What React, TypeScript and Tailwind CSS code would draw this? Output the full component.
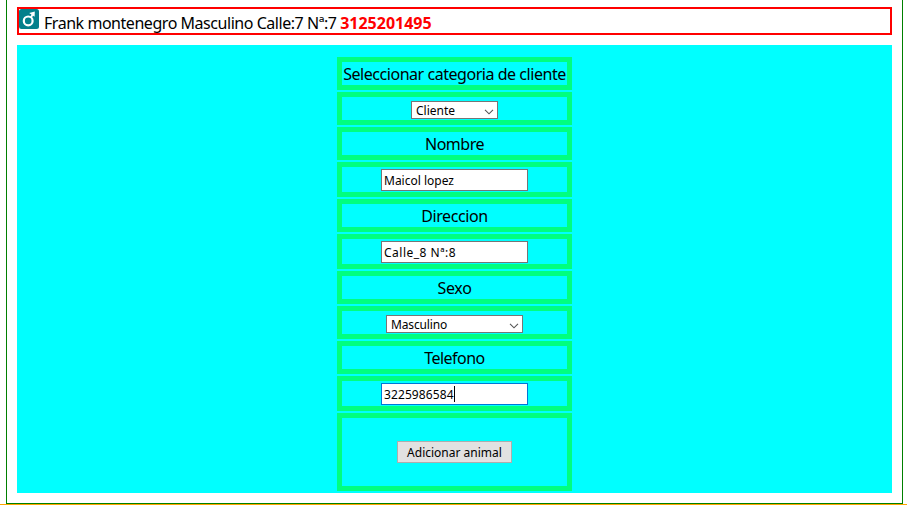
import type { ReactNode } from 'react';

function Cell({ children, className = 'h-[33px]' }: { children: ReactNode; className?: string }) {
  return (
    <div className={`flex w-full justify-center border-[5px] border-[#00ff7f] ${className}`}>
      {children}
    </div>
  );
}

function Label({ text, className }: { text: string; className: string }) {
  return (
    <Cell>
      <span className={`whitespace-nowrap pt-[2px] text-[16px] leading-[21px] ${className}`}>{text}</span>
    </Cell>
  );
}

function Select({ value, className }: { value: string; className: string }) {
  return (
    <Cell>
      <div
        className={`mt-1 flex h-[18px] items-center justify-between border border-[#767676] bg-white pl-1 pr-[3px] font-['Noto_Sans',sans-serif] text-[12px] leading-4 ${className}`}
      >
        <span className="pt-[2px]">{value}</span>
        <svg width="10" height="6" viewBox="0 0 10 6" className="mt-[3px]" fill="none" stroke="#555" strokeWidth="1.1">
          <path d="M1 .8 5 4.8 9 .8" />
        </svg>
      </div>
    </Cell>
  );
}

function Field({ value, focused = false, className }: { value: string; focused?: boolean; className: string }) {
  return (
    <Cell className="h-[35px]">
      <div
        className={`mt-[2px] flex h-[22px] w-[147px] items-center border bg-white pl-[2px] font-['Noto_Sans',sans-serif] text-[12px] leading-4 ${
          focused ? 'border-[#0078d7]' : 'border-[#767676]'
        }`}
      >
        <span className={`whitespace-nowrap pt-[2px] ${className}`}>{value}</span>
        {focused && <span className="h-4 w-px bg-black" />}
      </div>
    </Cell>
  );
}

export default function App() {
  return (
    <div className="h-[505px] overflow-hidden border-b border-[#ffa500] bg-white pl-[6px] pr-1 font-['Noto_Sans',sans-serif] text-black">
      <div className="h-[504px] border border-t-0 border-[#008000] px-[10px] pt-[7px]">
        <div className="flex h-7 border-2 border-[#ff0000]">
          <svg width="20" height="20" viewBox="0 0 20 20" fill="none" stroke="#fff">
            <rect width="20" height="20" rx="2.5" fill="#04808c" stroke="none" />
            <circle cx="9.2" cy="11.9" r="4.4" strokeWidth="2.2" />
            <path d="M11.8 8.4 13.8 5.2" strokeWidth="1.9" />
            <path d="M10.2 4 15.8 2.6 15.6 7.8Z" fill="#fff" stroke="none" />
          </svg>
          <p className="ml-[5px] whitespace-nowrap pt-1 text-[16px] leading-[21px]">
            <span className="tracking-[-0.46px]">Frank montenegro Masculino Calle:7 Nª:7 </span>
            <b className="text-[#ff0000]">3125201495</b>
          </p>
        </div>
        <div className="mt-[10px] flex h-[448px] justify-center bg-[#00ffff] pt-3">
          <div className="flex w-[235px] flex-col gap-[2px]">
            <Label text="Seleccionar categoria de cliente" className="tracking-[-0.46px]" />
            <Select value="Cliente" className="w-[87px]" />
            <Label text="Nombre" className="tracking-[-0.5px]" />
            <Field value="Maicol lopez" className="" />
            <Label text="Direccion" className="tracking-[-0.4px]" />
            <Field value="Calle_8 Nª:8" className="tracking-[0.5px]" />
            <Label text="Sexo" className="tracking-[-0.3px]" />
            <Select value="Masculino" className="w-[137px] tracking-[-0.15px]" />
            <Label text="Telefono" className="tracking-[-0.55px]" />
            <Field value="3225986584" focused className="tracking-[0.1px]" />
            <Cell className="h-[78px]">
              <button className="mt-[23px] h-[22px] w-[115px] whitespace-nowrap border border-[#adadad] bg-[#e1e1e1] pt-px text-[12px] leading-4">
                Adicionar animal
              </button>
            </Cell>
          </div>
        </div>
      </div>
    </div>
  );
}
